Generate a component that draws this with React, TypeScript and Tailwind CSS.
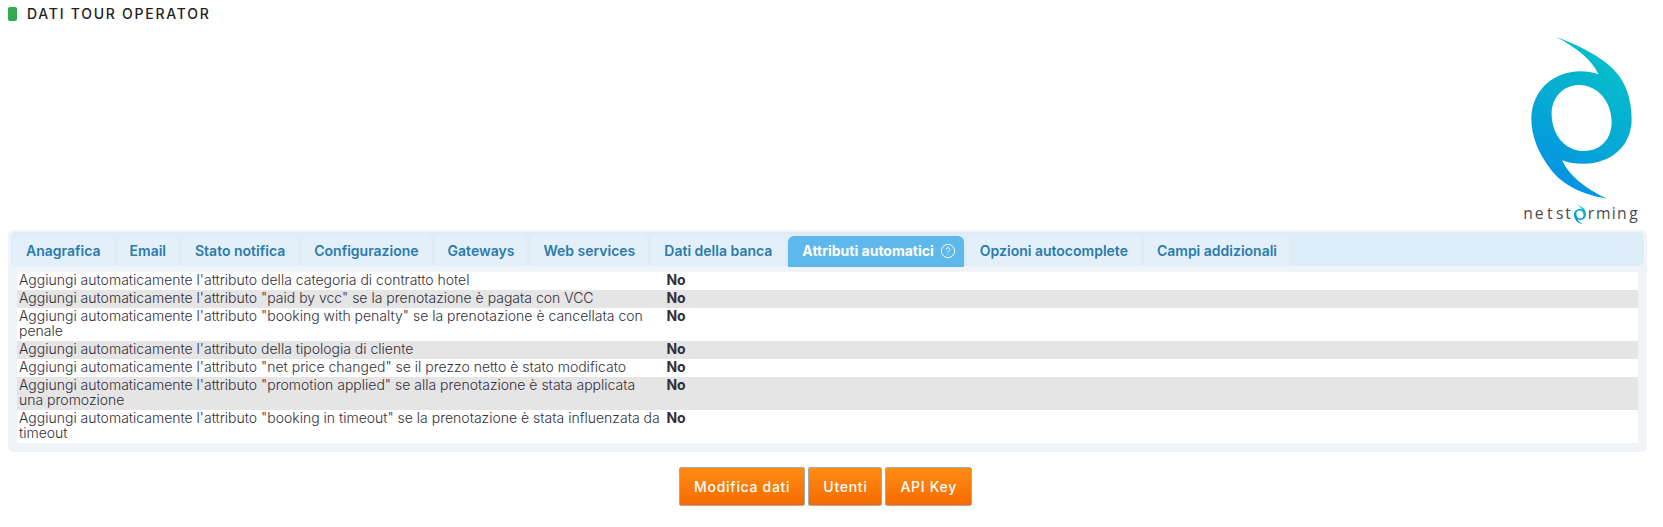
import { CircleQuestionMark } from "lucide-react";

const TABS = [
  "Anagrafica",
  "Email",
  "Stato notifica",
  "Configurazione",
  "Gateways",
  "Web services",
  "Dati della banca",
  "Attributi automatici",
  "Opzioni autocomplete",
  "Campi addizionali",
];

const ACTIVE_TAB = "Attributi automatici";

const ATTRIBUTES = [
  "Aggiungi automaticamente l'attributo della categoria di contratto hotel",
  'Aggiungi automaticamente l\'attributo "paid by vcc" se la prenotazione è pagata con VCC',
  'Aggiungi automaticamente l\'attributo "booking with penalty" se la prenotazione è cancellata con penale',
  "Aggiungi automaticamente l'attributo della tipologia di cliente",
  'Aggiungi automaticamente l\'attributo "net price changed" se il prezzo netto è stato modificato',
  'Aggiungi automaticamente l\'attributo "promotion applied" se alla prenotazione è stata applicata una\u00a0promozione',
  'Aggiungi automaticamente l\'attributo "booking in timeout" se la prenotazione è stata influenzata da timeout',
];

const ACTIONS = ["Modifica dati", "Utenti", "API Key"];

const SWIRL =
  "M139 36C205 60 276 96 312 135C350 174 365 226 365 285C363 365 302 416 220 416C196 416 176 414 157 406C175 450 226 491 291 521C222 510 158 482 122 433C84 382 64 334 64 280C66 198 128 139 212 139C232 139 248 142 265 148C246 103 195 66 139 36ZM208 180C160 180 125 217 125 266C125 330 166 378 222 378C272 378 305 342 305 292C305 229 262 180 208 180Z";

function Logo() {
  return (
    <svg
      className="h-[189px] w-[117px]"
      viewBox="42 33 351 567"
      role="img"
      aria-label="netstorming"
    >
      <defs>
        <linearGradient id="swirl" gradientUnits="userSpaceOnUse" x1="310" y1="140" x2="110" y2="440">
          <stop offset="0" stopColor="#05bcca" />
          <stop offset="0.5" stopColor="#05aad4" />
          <stop offset="1" stopColor="#0494e2" />
        </linearGradient>
      </defs>
      <path d={SWIRL} fill="url(#swirl)" fillRule="evenodd" />
      <path
        d={SWIRL}
        fill="url(#swirl)"
        fillRule="evenodd"
        transform="translate(184 535) scale(0.12)"
      />
      <g fill="#4a4a4f" fontFamily="'Open Sans', sans-serif" fontSize="47" fontWeight="500">
        <text x="40 74 111 138 166" y="583">netst</text>
        <text x="233 258 305 321 358" y="583">rming</text>
      </g>
    </svg>
  );
}

export default function App() {
  return (
    <main className="bg-white px-2 pt-[5px] pb-4 pr-4 font-['Inter',sans-serif] text-[14px] text-[#332f3a]">
      <header className="flex items-center gap-2.5">
        <span className="h-3.5 w-[9px] rounded-xs bg-[#34a853]" />
        <h1 className="text-[14px] leading-[18px] font-medium tracking-[0.125em] text-[#222] uppercase">
          Dati tour operator
        </h1>
      </header>

      <div className="flex justify-end pt-[13px] pr-[6px] pb-[5px]">
        <Logo />
      </div>

      <section className="rounded-md bg-[#f0f4f8] px-[3px] pt-0.5 pb-[9px]">
        <nav className="flex gap-[3px] rounded-md bg-[#deecf8] px-0.5 pt-1">
          {TABS.map((tab) => {
            const active = tab === ACTIVE_TAB;
            return (
              <a
                key={tab}
                href="#"
                aria-current={active ? "page" : undefined}
                className={
                  active
                    ? "-mb-px flex h-[31px] items-center gap-[6px] rounded-t-md bg-[#5fb8eb] pr-2 pb-0.5 pl-3.5 font-bold text-white"
                    : "flex h-[30px] items-center rounded-t-md bg-[#e3f0fa] px-[13px] pb-0.5 font-semibold text-[#2c7bab]"
                }
              >
                {tab}
                {active && <CircleQuestionMark size={16} strokeWidth={1.5} />}
              </a>
            );
          })}
        </nav>

        <div className="px-[6px] pt-[6px]">
          <table className="w-full table-fixed text-left leading-[15px]">
            <tbody>
              {ATTRIBUTES.map((label) => (
                <tr key={label} className="bg-white align-top even:bg-[#e5e5e5]">
                  <th scope="row" className="w-2/5 px-0.5 pb-[3px] font-light">
                    {label}
                  </th>
                  <td className="px-px pb-[3px] font-bold">No</td>
                </tr>
              ))}
            </tbody>
          </table>
        </div>
      </section>

      <div className="flex justify-center gap-[3px] pt-[15px] pr-1">
        {ACTIONS.map((action) => (
          <button
            key={action}
            type="button"
            className="h-[39px] rounded-xs border border-[#a9a9a9] bg-linear-to-b from-[#ff8c14] to-[#f56a00] px-3.5 text-[14px] font-medium tracking-wider text-white"
          >
            {action}
          </button>
        ))}
      </div>
    </main>
  );
}
